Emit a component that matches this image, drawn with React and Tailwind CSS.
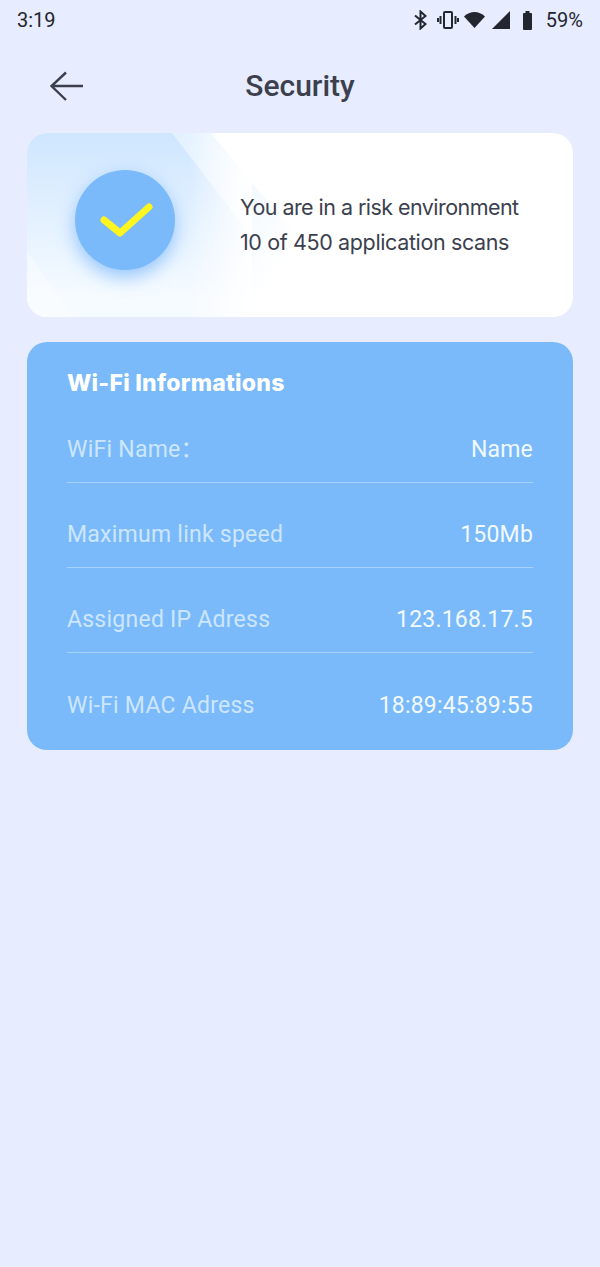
const rows = [
  { label: "WiFi Name：", value: "Name" },
  { label: "Maximum link speed", value: "150Mb" },
  { label: "Assigned IP Adress", value: "123.168.17.5" },
  { label: "Wi-Fi MAC Adress", value: "18:89:45:89:55" },
];

const StatusIcons = () => (
  <div className="flex items-center">
    <svg width="13" height="20" viewBox="0 0 13 20" className="mr-[10px]" fill="none" stroke="#23262f" strokeWidth="2">
      <path d="M1 5.5 L11.5 14 L6.5 18.5 V1.5 L11.5 6 L1 14.5" />
    </svg>
    <svg width="22" height="18" viewBox="0 0 22 18" className="mr-[5px]" fill="none" stroke="#23262f">
      <rect x="7" y="1" width="8" height="16" rx="1" strokeWidth="2" />
      <path d="M3.5 5v8M18.5 5v8" strokeWidth="2" />
      <path d="M1 7v4M21 7v4" strokeWidth="2" />
    </svg>
    <svg width="21" height="16" viewBox="0 0 21 16" className="mr-[7px]" fill="#23262f">
      <path d="M0 4.5C3 1.7 6.7 0 10.5 0S18 1.7 21 4.5L10.5 16Z" />
    </svg>
    <svg width="18" height="18" viewBox="0 0 18 18" className="mr-[13px]" fill="#23262f">
      <path d="M18 0V18H0Z" />
    </svg>
    <svg width="9" height="19" viewBox="0 0 9 19" className="mr-[14px]" fill="#23262f">
      <path d="M2.5 0h4v2h1.5a1 1 0 0 1 1 1v15a1 1 0 0 1-1 1H1a1 1 0 0 1-1-1V3a1 1 0 0 1 1-1h1.5Z" />
    </svg>
    <span className="text-[20px] leading-none text-[#23262f]">59%</span>
  </div>
);

export default function App() {
  return (
    <div className="min-h-[1267px] bg-[#e7ecfe] font-['Roboto','Noto_Sans_CJK_SC',sans-serif]">
      <div className="flex h-[40px] items-center justify-between px-[17px]">
        <span className="text-[20px] leading-none text-[#23262f]">3:19</span>
        <StatusIcons />
      </div>

      <div className="relative flex h-[93px] items-center justify-center pb-[1px]">
        <svg className="absolute left-[48px] top-[30px]" width="38" height="32" viewBox="0 0 38 32" fill="none" stroke="#3c3f4e" strokeWidth="2.4">
          <path d="M35 16H3.5M18 2.5 3.5 16 18 30" />
        </svg>
        <h1 className="text-[30px] font-medium leading-none text-[#3c3f4e]">Security</h1>
      </div>

      <div className="mx-[27px] flex flex-col gap-[25px]">
        <div className="relative flex h-[184px] items-center overflow-hidden rounded-[20px] bg-white">
          <svg className="absolute inset-0" width="546" height="184" viewBox="0 0 546 184">
            <defs>
              <linearGradient id="a" x1="0" y1="0" x2="0" y2="1">
                <stop offset="0" stopColor="#cfe6ff" />
                <stop offset="0.9" stopColor="#f6fbff" />
              </linearGradient>
              <linearGradient id="b" x1="0" y1="0" x2="0.9" y2="0.8">
                <stop offset="0" stopColor="#e2f1ff" />
                <stop offset="0.95" stopColor="#ffffff" />
              </linearGradient>
              <linearGradient id="c" x1="0" y1="0" x2="1" y2="0">
                <stop offset="0.72" stopColor="#ffffff" stopOpacity="0" />
                <stop offset="1" stopColor="#ffffff" />
              </linearGradient>
            </defs>
            <path d="M145 0H184L270 104V184H145Z" fill="url(#b)" />
            <path d="M0 0H145L225 104V184H0Z" fill="url(#a)" />
            <rect x="0" y="0" width="225" height="184" fill="url(#c)" />
            <path d="M0 118L46 184H0Z" fill="#ffffff" fillOpacity="0.35" />
          </svg>
          <div className="relative mb-[10px] ml-[48px] flex h-[100px] w-[100px] items-center justify-center rounded-full bg-[#7abafa] shadow-[0_7px_18px_rgba(90,165,250,0.6)]">
            <svg className="ml-[4px]" width="54" height="38" viewBox="0 0 54 38" fill="none" stroke="#fdf51f" strokeWidth="7" strokeLinecap="round" strokeLinejoin="round">
              <path d="M4 19 L20 32 L49 6" />
            </svg>
          </div>
          <div className="relative ml-[65px] font-['Inter',sans-serif] text-[21.5px] leading-[35px] text-[#3c3f4e]">
            <p className="tracking-[-0.55px]">You are in a risk environment</p>
            <p className="tracking-[-0.37px]">10 of 450 application scans</p>
          </div>
        </div>

        <div className="h-[408px] rounded-[20px] bg-[#7abafa] px-[40px] pt-[28px]">
          <h2 className="font-['Inter',sans-serif] text-[23px] font-extrabold leading-[27px] tracking-[0.25px] text-white">Wi-Fi Informations</h2>
          <div className="mt-[1px]">
            {rows.map((row, i) => (
              <div
                key={row.label}
                className={`flex h-[85px] items-center justify-between pt-[21px] ${i < rows.length - 1 ? "border-b border-[#a6d2fc]" : ""}`}
              >
                <span className="text-[23px] tracking-[0.25px] text-[#cde6fd]">{row.label}</span>
                <span className="text-[23px] tracking-[0.2px] text-[#f2f9ff]">{row.value}</span>
              </div>
            ))}
          </div>
        </div>
      </div>
    </div>
  );
}
